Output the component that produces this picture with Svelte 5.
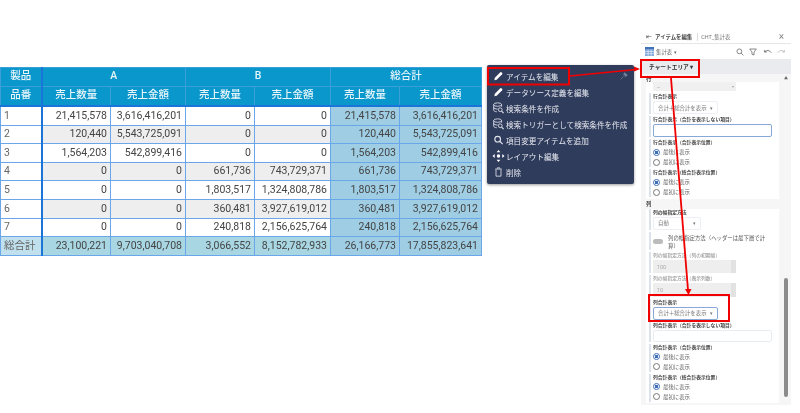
<script>
	const rows = [
		['1', '21,415,578', '3,616,416,201', '0', '0', '21,415,578', '3,616,416,201'],
		['2', '120,440', '5,543,725,091', '0', '0', '120,440', '5,543,725,091'],
		['3', '1,564,203', '542,899,416', '0', '0', '1,564,203', '542,899,416'],
		['4', '0', '0', '661,736', '743,729,371', '661,736', '743,729,371'],
		['5', '0', '0', '1,803,517', '1,324,808,786', '1,803,517', '1,324,808,786'],
		['6', '0', '0', '360,481', '3,927,619,012', '360,481', '3,927,619,012'],
		['7', '0', '0', '240,818', '2,156,625,764', '240,818', '2,156,625,764']
	];
	const total = ['総合計', '23,100,221', '9,703,040,708', '3,066,552', '8,152,782,933', '26,166,773', '17,855,823,641'];
	const widths = [41, 69, 75, 69, 76, 69, 82];

	const menu = [
		{ icon: 'pen', label: 'アイテムを編集' },
		{ icon: 'pen', label: 'データソース定義を編集' },
		{ icon: 'db', label: '検索条件を作成' },
		{ icon: 'db', label: '検索トリガーとして検索条件を作成' },
		{ icon: 'search', label: '項目変更アイテムを追加' },
		{ icon: 'move', label: 'レイアウト編集' },
		{ icon: 'trash', label: '削除' }
	];
</script>

{#snippet radios()}
	<div class="radio on"><i></i>最後に表示</div>
	<div class="radio"><i></i>最初に表示</div>
{/snippet}

<div class="page">
	<table class="grid">
		<colgroup>
			{#each widths as w}<col style="width:{w}px" />{/each}
		</colgroup>
		<thead>
			<tr class="h1">
				<th class="rh">製品</th>
				<th colspan="2">A</th>
				<th colspan="2">B</th>
				<th colspan="2">総合計</th>
			</tr>
			<tr class="h2">
				<th class="rh">品番</th>
				{#each [0, 1, 2] as _}
					<th>売上数量</th>
					<th>売上金額</th>
				{/each}
			</tr>
		</thead>
		<tbody>
			{#each rows as row, i}
				<tr class:alt={i % 2 === 1}>
					{#each row as cell, c}
						<td class:rh={c === 0} class:sum={c >= 5}>{cell}</td>
					{/each}
				</tr>
			{/each}
			<tr class="total">
				{#each total as cell, c}
					<td class:rh={c === 0} class:sum={c >= 5}>{cell}</td>
				{/each}
			</tr>
		</tbody>
	</table>

	<ul class="menu">
		<svg class="pin" viewBox="0 0 12 12" width="8" height="8"><path d="M1 11 5 7M4 3l5 5M7 1l4 4-2 1-3-3z" fill="#7f8aa3" stroke="#7f8aa3" /></svg>
		{#each menu as item}
			<li>
				{#if item.icon === 'pen'}
					<svg viewBox="0 0 12 12" width="10" height="10"><path d="M1 11l.6-2.8L8.200 1.600a1 1 0 0 1 1.400 0l.8.8a1 1 0 0 1 0 1.400L3.800 10.400z" fill="#fff" /></svg>
				{:else if item.icon === 'db'}
					<svg viewBox="0 0 14 14" width="12" height="12" fill="none" stroke="#dfe3ec" stroke-width="1"><ellipse cx="6" cy="3" rx="4.600" ry="2" /><path d="M1.400 3v6.500c0 1 1.600 1.800 3.600 1.900M10.600 3v2.500M1.400 6.300c0 1 2 1.900 4.600 1.900" /><circle cx="9" cy="9" r="2.200" /><path d="M10.600 10.700 13 13" stroke-width="1.400" /></svg>
				{:else if item.icon === 'search'}
					<svg viewBox="0 0 12 12" width="10" height="10" fill="none" stroke="#dfe3ec" stroke-width="1.400"><circle cx="5" cy="5" r="3.400" /><path d="M7.500 7.500 11 11" /></svg>
				{:else if item.icon === 'move'}
					<svg viewBox="0 0 14 14" width="12" height="12" fill="#fff"><path d="M7 0l2.200 2.600H4.800zM7 14l2.200-2.600H4.800zM0 7l2.600-2.200v4.400zM14 7l-2.600-2.200v4.400z" /><circle cx="7" cy="7" r="2" /></svg>
				{:else}
					<svg viewBox="0 0 12 12" width="10" height="10" fill="none" stroke="#dfe3ec" stroke-width="1"><path d="M2 2.500h8M4.500 2V1h3v1M3 3v8h6V3" /></svg>
				{/if}
				<span>{item.label}</span>
			</li>
		{/each}
	</ul>

	<aside class="panel">
		<header class="title">
			<span class="back">⇤</span>
			<b>アイテムを編集</b>
			<span class="sub">CHT_集計表</span>
			<span class="close">×</span>
		</header>
		<div class="tools">
			<svg viewBox="0 0 10 10" width="9" height="9"><rect width="10" height="10" fill="#7fa6d8" /><rect y="0" width="10" height="2.500" fill="#3f72b8" /><path d="M0 5h10M0 7.500h10M3.500 2.500V10M6.800 2.500V10" stroke="#fff" stroke-width=".6" /></svg>
			<span class="tname">集計表 ▾</span>
			<span class="tright">
				<svg viewBox="0 0 12 12" width="8" height="8" fill="none" stroke="#777" stroke-width="1.300"><circle cx="5" cy="5" r="3.600" /><path d="M7.600 7.600 11 11" /></svg>
				<svg viewBox="0 0 12 12" width="8" height="8" fill="none" stroke="#777" stroke-width="1.300"><path d="M1 1.500h10L7.500 6v4.500l-3-1V6z" /></svg>
				<svg class="gap" viewBox="0 0 12 12" width="8" height="8" fill="none" stroke="#666" stroke-width="1.300"><path d="M1 6c3-3 7-3 10 1M1 3v3h3" /></svg>
				<svg viewBox="0 0 12 12" width="8" height="8" fill="none" stroke="#bbb" stroke-width="1.300"><path d="M11 6C8 3 4 3 1 7M11 3v3H8" /></svg>
			</span>
		</div>
		<div class="area"><b>チャートエリア ▾</b></div>
		<div class="scroll">
			<div class="sec first">行</div>
			<div class="card">
				<div class="stub"><span>--</span><em>▾</em></div>
				<div class="group">
					<label>行合計表示</label>
					<div class="select">合計＋総合計を表示<em>▾</em></div>
				</div>
				<div class="group">
					<label>行合計表示（合計を表示しない項目）</label>
					<div class="input focus"></div>
				</div>
				<div class="group">
					<label>行合計表示（合計表示位置）</label>
					{@render radios()}
				</div>
				<div class="group">
					<label>行合計表示（総合計表示位置）</label>
					{@render radios()}
				</div>
			</div>
			<div class="sec">列</div>
			<div class="card">
				<div class="group">
					<label>列の幅指定方法</label>
					<div class="select auto">自動<em>▾</em></div>
				</div>
				<div class="group toggle-row">
					<span class="toggle"></span>
					<span class="ttext">列の幅指定方法（ヘッダーは最下層で計算）</span>
				</div>
				<div class="group">
					<label class="dim">列の幅指定方法（列の初期幅）</label>
					<div class="num">100</div>
				</div>
				<div class="group">
					<label class="dim">列の幅指定方法（表示列数）</label>
					<div class="num">10</div>
				</div>
				<div class="group">
					<label>列合計表示</label>
					<div class="select focus">合計＋総合計を表示<em>▾</em></div>
				</div>
				<div class="group">
					<label>列合計表示（合計を表示しない項目）</label>
					<div class="input short"></div>
				</div>
				<div class="group">
					<label>列合計表示（合計表示位置）</label>
					{@render radios()}
				</div>
				<div class="group">
					<label>列合計表示（総合計表示位置）</label>
					{@render radios()}
				</div>
			</div>
			<span class="up">▲</span>
			<div class="thumb"></div>
		</div>
	</aside>

	<!-- red call-outs drawn over the screenshot -->
	<svg class="notes" viewBox="0 0 800 413" width="800" height="413" fill="none" stroke="#f00000">
		<rect x="488" y="68" width="81" height="16.500" stroke-width="2" />
		<rect x="641" y="60" width="58" height="17" stroke-width="2" />
		<rect x="649" y="295" width="80" height="26" stroke-width="2" />
		<path d="M570 76 636 69.500" stroke-width="1.500" />
		<path d="M640 69 634 66.500v5z" fill="#f00000" stroke="none" />
		<path d="M671 78 688 290" stroke-width="1.800" />
		<path d="M688.500 295 685 289h6.500z" fill="#f00000" stroke="none" />
	</svg>
</div>

<style>
	:global(body) {
		margin: 0;
		background: #fff;
	}

	.page {
		position: relative;
		width: 800px;
		height: 413px;
		overflow: hidden;
		font-family: Roboto, 'Noto Sans CJK JP', sans-serif;
		display: flex;
		align-items: flex-start;
	}

	.grid {
		margin-top: 67px;
		width: 481px;
		flex: none;
		table-layout: fixed;
		border-collapse: collapse;
		font-size: 10.500px;
		color: #444;
		border: 1px solid #5fa0e6;
		filter: blur(0.3px);
	}

	.grid th {
		background: #0a97cb;
		color: #e8f6fb;
		font-weight: 500;
		font-size: 10.500px;
		line-height: 1;
		padding: 0 0 1px;
		border: 1px solid #3a9fd8;
	}

	.h1 th {
		height: 17px;
	}

	.h2 th {
		height: 17px;
		border-bottom: 2px solid #1b74d8;
	}

	.grid td {
		height: 17.600px;
		padding: 0 3px 0 3px;
		text-align: right;
		background: #fff;
		border: 1px solid #6aa6ea;
		white-space: nowrap;
		line-height: 1;
	}

	.grid tr.alt td {
		background: #eeeeee;
	}

	.grid td.rh {
		text-align: left;
		background: #fff;
		color: #666;
	}

	.grid .rh {
		border-right: 2px solid #1b74d8;
	}

	.grid tr.alt td.rh {
		background: #fff;
	}

	.grid td.sum,
	.grid tr.alt td.sum {
		background: #9fcde3;
	}

	.grid tr.total td {
		background: #a8d6e2;
	}

	.grid tr.total td.rh {
		background: #bfe0ec;
	}

	.grid tr.total td.sum {
		background: #9fcde3;
	}

	.menu {
		position: relative;
		box-sizing: border-box;
		flex: none;
		width: 147px;
		height: 119px;
		margin: 65px 0 0 5px;
		padding: 3px 0 0 5px;
		list-style: none;
		background: #303c5c;
		border-radius: 2px;
		box-shadow: 0 1px 3px rgba(0, 0, 0, 0.4);
		color: #e6e9f0;
		font-size: 7.600px;
		filter: blur(0.3px);
	}

	.menu li {
		display: flex;
		align-items: center;
		gap: 1px;
		height: 16px;
		white-space: nowrap;
	}

	.menu li svg {
		flex: none;
		width: 13px;
	}

	.pin {
		position: absolute;
		top: 7px;
		right: 6px;
	}

	.panel {
		flex: none;
		box-sizing: border-box;
		width: 150px;
		height: 375px;
		margin: 30px 0 0 7px;
		background: #fff;
		color: #555;
		font-size: 5.400px;
		display: flex;
		flex-direction: column;
		filter: blur(0.45px);
	}

	.title {
		flex: none;
		height: 14px;
		box-sizing: border-box;
		display: flex;
		align-items: center;
		gap: 2px;
		padding: 0 7px 0 5px;
		border-bottom: 1px solid #e6e6e6;
	}

	.title b {
		font-weight: 700;
		color: #444;
		margin-left: 1px;
	}

	.back {
		font-size: 7px;
	}

	.sub {
		margin-left: 3px;
		padding-left: 3px;
		border-left: 1px solid #ddd;
		color: #777;
	}

	.close {
		margin-left: auto;
		font-size: 10px;
		color: #888;
	}

	.tools {
		flex: none;
		height: 15px;
		display: flex;
		align-items: center;
		gap: 2px;
		padding: 0 6px 0 4px;
	}

	.tname {
		color: #666;
	}

	.tright {
		margin-left: auto;
		display: flex;
		align-items: center;
		gap: 5px;
	}

	.tright .gap {
		margin-left: 2px;
	}

	.area {
		flex: none;
		height: 15px;
		box-sizing: border-box;
		padding: 0 0 0 8px;
		display: flex;
		align-items: center;
		background: #e9ebee;
		color: #333;
		font-size: 5.700px;
	}

	.area b {
		font-weight: 700;
	}

	.scroll {
		position: relative;
		flex: 1;
		background: #f6f6f6;
		padding: 0 12px 0 5px;
	}

	.up {
		position: absolute;
		top: 1px;
		right: 3px;
		font-size: 4px;
		color: #666;
	}

	.thumb {
		position: absolute;
		top: 204px;
		right: 3px;
		width: 4px;
		height: 119px;
		border-radius: 2px;
		background: #8b8b8b;
	}

	.sec {
		height: 10px;
		line-height: 11px;
		font-weight: 700;
		color: #444;
	}

	.sec.first {
		height: 8px;
		line-height: 11px;
	}

	.card {
		background: #fff;
		padding: 0 7px 1.500px 3px;
	}

	.stub {
		box-sizing: border-box;
		margin: 0 0 0.500px 4px;
		padding: 0 2px 0 4px;
		width: 83px;
		height: 9px;
		display: flex;
		align-items: center;
		justify-content: space-between;
		background: #f0f0f0;
		color: #aaa;
	}

	.stub em {
		font-style: normal;
		font-size: 4px;
	}

	.group {
		border-left: 2px solid #dde3ea;
		padding: 0 0 0 2px;
		margin-top: 2px;
	}

	.card > .group:first-child {
		margin-top: 0;
	}

	.group label {
		display: block;
		height: 7px;
		line-height: 7px;
		font-size: 4.800px;
		font-weight: 700;
		color: #444;
		margin-bottom: 1px;
		white-space: nowrap;
	}

	.group label.dim {
		color: #999;
		font-weight: 500;
	}

	.select {
		box-sizing: border-box;
		width: 65px;
		height: 13px;
		display: flex;
		align-items: center;
		justify-content: space-between;
		padding: 0 4px;
		border: 1px solid #eceff3;
		border-radius: 2px;
		color: #777;
		white-space: nowrap;
	}

	.select em {
		font-style: normal;
		font-size: 5px;
	}

	.select.auto {
		width: 48px;
	}

	.select.focus,
	.input.focus {
		border-color: #86a9d8;
	}

	.input {
		box-sizing: border-box;
		width: 119px;
		height: 13px;
		border: 1px solid #e8edf2;
		border-radius: 2px;
	}

	.input.short {
		height: 12px;
	}

	.num {
		box-sizing: border-box;
		width: 83px;
		height: 13.500px;
		padding: 4px 0 0 4px;
		background: #eeeeee;
		border-right: 5px solid #e2e2e2;
		color: #aaa;
	}

	.toggle-row {
		display: flex;
		gap: 5px;
		align-items: flex-start;
		padding-top: 2px;
		line-height: 8px;
	}

	.ttext {
		width: 100px;
	}

	.toggle {
		flex: none;
		width: 10px;
		height: 5px;
		margin-top: 5px;
		border-radius: 3px;
		background: #bbb;
	}

	.radio {
		display: flex;
		align-items: center;
		gap: 3px;
		height: 10px;
		color: #666;
		white-space: nowrap;
	}

	.radio i {
		box-sizing: border-box;
		width: 7px;
		height: 7px;
		border-radius: 50%;
		border: 1px solid #777;
	}

	.radio.on i {
		border-color: #3f6fb5;
		background: radial-gradient(circle, #3f6fb5 45%, #fff 50%);
	}

	.notes {
		position: absolute;
		inset: 0;
	}
</style>
